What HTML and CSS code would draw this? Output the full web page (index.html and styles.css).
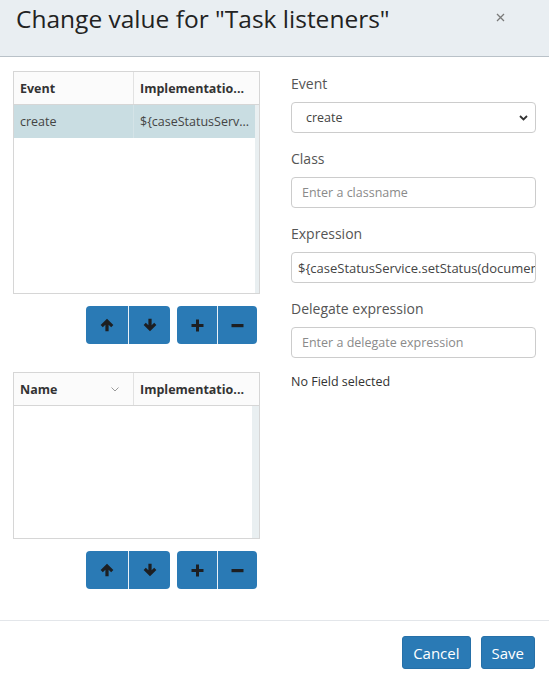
FILE: index.html
```html
<!DOCTYPE html>
<html>
<head>
<meta charset="utf-8">
<link rel="stylesheet" href="styles.css">
</head>
<body>
<div class="modal">
  <div class="modal-header">
    <h2 class="title">Change value for "Task listeners"</h2>
    <span class="close"><svg width="9" height="9" viewBox="0 0 9 9"><path d="M1 1 L8 8 M8 1 L1 8" stroke="#7a7a7a" stroke-width="1.3" fill="none"/></svg></span>
  </div>
  <div class="modal-body">
    <div class="left">
      <div class="grid grid-top">
        <div class="grid-head">
          <div class="hcell c1">Event</div>
          <div class="hcell c2">Implementatio...</div>
        </div>
        <div class="grid-body">
          <div class="rows">
            <div class="row selected">
              <div class="cell c1">create</div>
              <div class="cell c2">${caseStatusServ...</div>
            </div>
          </div>
          <div class="scroll"></div>
        </div>
      </div>
      <div class="btn-row">
        <div class="btn-group">
          <button class="gbtn wide"><svg width="14" height="14" viewBox="0 0 13 13"><path d="M6.5 0.6 L12.4 6.6 L10.4 8.6 L8 6.2 V12.4 H5 V6.2 L2.6 8.6 L0.6 6.6 Z" fill="#1d1f22"/></svg></button>
          <button class="gbtn wide"><svg width="14" height="14" viewBox="0 0 13 13"><path d="M6.5 12.4 L12.4 6.4 L10.4 4.4 L8 6.8 V0.6 H5 V6.8 L2.6 4.4 L0.6 6.4 Z" fill="#1d1f22"/></svg></button>
        </div>
        <div class="btn-group">
          <button class="gbtn"><svg width="13" height="13" viewBox="0 0 13 13"><path d="M5 0.5 H8 V5 H12.5 V8 H8 V12.5 H5 V8 H0.5 V5 H5 Z" fill="#1d1f22"/></svg></button>
          <button class="gbtn"><svg width="13" height="13" viewBox="0 0 13 13"><rect x="0.5" y="5" width="12" height="3.2" fill="#1d1f22"/></svg></button>
        </div>
      </div>
      <div class="grid grid-bottom">
        <div class="grid-head">
          <div class="hcell c1">Name<svg class="sort" width="8" height="5" viewBox="0 0 8 5"><path d="M0.5 0.5 L4 4 L7.5 0.5" stroke="#9a9a9a" stroke-width="1" fill="none"/></svg></div>
          <div class="hcell c2">Implementatio...</div>
        </div>
        <div class="grid-body">
          <div class="rows"></div>
          <div class="scroll"></div>
        </div>
      </div>
      <div class="btn-row">
        <div class="btn-group">
          <button class="gbtn wide"><svg width="14" height="14" viewBox="0 0 13 13"><path d="M6.5 0.6 L12.4 6.6 L10.4 8.6 L8 6.2 V12.4 H5 V6.2 L2.6 8.6 L0.6 6.6 Z" fill="#1d1f22"/></svg></button>
          <button class="gbtn wide"><svg width="14" height="14" viewBox="0 0 13 13"><path d="M6.5 12.4 L12.4 6.4 L10.4 4.4 L8 6.8 V0.6 H5 V6.8 L2.6 4.4 L0.6 6.4 Z" fill="#1d1f22"/></svg></button>
        </div>
        <div class="btn-group">
          <button class="gbtn"><svg width="13" height="13" viewBox="0 0 13 13"><path d="M5 0.5 H8 V5 H12.5 V8 H8 V12.5 H5 V8 H0.5 V5 H5 Z" fill="#1d1f22"/></svg></button>
          <button class="gbtn"><svg width="13" height="13" viewBox="0 0 13 13"><rect x="0.5" y="5" width="12" height="3.2" fill="#1d1f22"/></svg></button>
        </div>
      </div>
    </div>
    <div class="right">
      <label class="label">Event</label>
      <div class="select"><span>create</span><svg width="9" height="6" viewBox="0 0 9 6"><path d="M1 1 L4.5 4.5 L8 1" stroke="#333" stroke-width="1.8" fill="none"/></svg></div>
      <label class="label">Class</label>
      <div class="input placeholder">Enter a classname</div>
      <label class="label">Expression</label>
      <div class="input value">${caseStatusService.setStatus(document.getVariable())}</div>
      <label class="label">Delegate expression</label>
      <div class="input placeholder">Enter a delegate expression</div>
      <div class="note">No Field selected</div>
    </div>
  </div>
  <div class="modal-footer">
    <button class="btn">Cancel</button>
    <button class="btn">Save</button>
  </div>
</div>
</body>
</html>
```
FILE: styles.css
```css
* { box-sizing: border-box; }
html, body { margin: 0; padding: 0; background: #fff; }
body { font-family: "Open Sans", "Liberation Sans", sans-serif; color: #333; }

.modal { display: flex; flex-direction: column; height: 680px; width: 549px; }

.modal-header {
  height: 57px;
  background: #e9eef2;
  border-bottom: 1px solid #b9c1c8;
  display: flex;
  justify-content: space-between;
  align-items: flex-start;
  padding: 2px 44px 0 16px;
}
.title {
  margin: 0;
  font-size: 24.5px;
  line-height: 34px;
  font-weight: 400;
  color: #222;
}
.close { margin-top: 11px; display: block; line-height: 0; }

.modal-body {
  flex: 1;
  display: grid;
  grid-template-columns: 247px 245px;
  column-gap: 31px;
  padding: 14px 13px 0 13px;
}

.grid { border: 1px solid #d6d6d6; display: flex; flex-direction: column; }
.grid-top { height: 223px; }
.grid-bottom { height: 167px; margin-top: 28px; }
.grid-head { display: flex; height: 33px; border-bottom: 1px solid #d6d6d6; background: #fbfbfb; }
.hcell {
  display: flex; align-items: center;
  font-size: 12.5px; font-weight: 700; color: #333;
  padding: 0 6px;
}
.c1 { width: 120px; border-right: 1px solid #e2e2e2; justify-content: space-between; }
.c2 { flex: 1; }
.sort { margin-right: 8px; }
.grid-body { flex: 1; display: flex; }
.rows { flex: 1; }
.scroll { width: 7px; background: #e9eff1; }
.row { display: flex; height: 33px; }
.row.selected { background: #c9dde2; }
.cell { display: flex; align-items: center; font-size: 12.5px; color: #444; padding: 0 6px; }
.row .c1 { border-right: 1px solid #d4e3e7; }

.btn-row { display: flex; justify-content: flex-end; gap: 7px; margin-top: 12px; padding-right: 3px; }
.btn-group { display: flex; }
.gbtn {
  width: 40px; height: 38px;
  background: #2a7ab5;
  border: none;
  padding: 0;
  display: flex; align-items: center; justify-content: center;
}
.gbtn.wide { width: 42px; }
.gbtn + .gbtn { border-left: 1px solid #e9f1f8; }
.btn-group .gbtn:first-child { border-radius: 4px 0 0 4px; }
.btn-group .gbtn:last-child { border-radius: 0 4px 4px 0; }

.right { padding-top: 3px; display: flex; flex-direction: column; }
.label { font-size: 14px; line-height: 20px; color: #555; margin-bottom: 8px; }
.select, .input {
  height: 31px;
  border: 1px solid #ccc;
  border-radius: 4px;
  font-size: 12.5px;
  display: flex; align-items: center;
  margin-bottom: 16px;
  white-space: nowrap; overflow: hidden;
}
.select { justify-content: space-between; padding: 0 7px 0 14px; color: #444; }
.input { padding: 0 10px; }
.placeholder { color: #8a8a8a; }
.value { color: #444; padding-left: 6px; font-size: 13px; }
.note { font-size: 12.5px; line-height: 17px; color: #333; margin-top: -1px; }

.modal-footer {
  height: 60px;
  border-top: 1px solid #e3e6ea;
  display: flex; justify-content: flex-end; align-items: flex-start;
  gap: 10px;
  padding: 15px 14px 0 0;
}
.btn {
  height: 33px;
  background: #2a7ab5;
  border: 1px solid #2670a8;
  border-radius: 3px;
  color: #fff;
  font-family: "Open Sans", sans-serif;
  font-size: 15px;
  padding: 0 10px;
}
```
